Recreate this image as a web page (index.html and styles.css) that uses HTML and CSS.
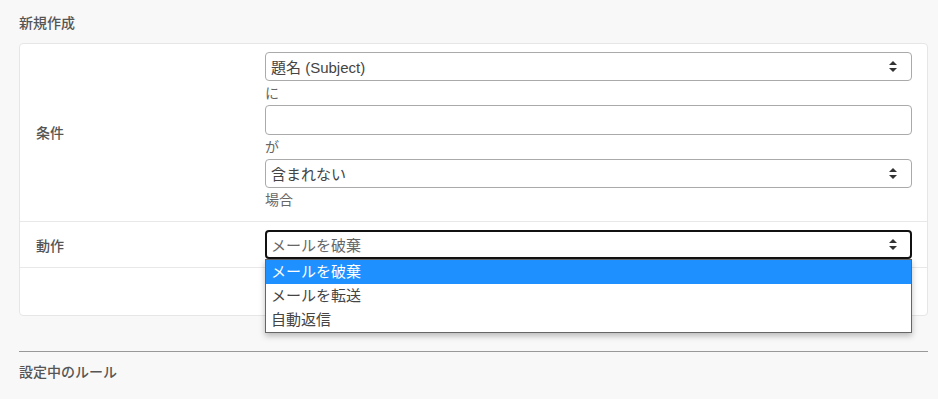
FILE: index.html
```html
<!DOCTYPE html>
<html lang="ja">
<head>
    <meta charset="UTF-8">
    <meta name="viewport" content="width=device-width, initial-scale=1.0">
    <title>メールフィルタ</title>
    <link rel="stylesheet" href="styles.css">
</head>
<body>
    <div class="page">
        <h2 class="section-title">新規作成</h2>

        <div class="rule-card">
            <!-- 条件 -->
            <div class="rule-row">
                <div class="rule-label">条件</div>
                <div class="rule-controls">
                    <div class="select-box">
                        <span>題名 (Subject)</span>
                        <svg class="select-arrow" width="8" height="11" viewBox="0 0 8 11"><path d="M4 0 L8 4 H0 Z M0 7 H8 L4 11 Z" fill="#333"/></svg>
                    </div>
                    <div class="hint">に</div>
                    <div class="text-box"></div>
                    <div class="hint">が</div>
                    <div class="select-box">
                        <span>含まれない</span>
                        <svg class="select-arrow" width="8" height="11" viewBox="0 0 8 11"><path d="M4 0 L8 4 H0 Z M0 7 H8 L4 11 Z" fill="#333"/></svg>
                    </div>
                    <div class="hint">場合</div>
                </div>
            </div>

            <!-- 動作 -->
            <div class="rule-row action-row">
                <div class="rule-label">動作</div>
                <div class="rule-controls">
                    <div class="dropdown">
                        <div class="select-box focused">
                            <span>メールを破棄</span>
                            <svg class="select-arrow" width="8" height="11" viewBox="0 0 8 11"><path d="M4 0 L8 4 H0 Z M0 7 H8 L4 11 Z" fill="#333"/></svg>
                        </div>
                        <ul class="dropdown-list">
                            <li class="selected">メールを破棄</li>
                            <li>メールを転送</li>
                            <li>自動返信</li>
                        </ul>
                    </div>
                </div>
            </div>

            <div class="rule-row empty-row"></div>
        </div>

        <hr class="divider">

        <h2 class="section-title">設定中のルール</h2>
    </div>
</body>
</html>
```

FILE: styles.css
```css
body {
    margin: 0;
    background-color: #f8f8f8;
    font-family: "Liberation Sans", "Noto Sans CJK JP", sans-serif;
    color: #444;
}

.page {
    padding: 12px 10px 0 19px;
}

.section-title {
    font-size: 14px;
    font-weight: 500;
    color: #555;
    margin: 0;
    height: 22px;
    line-height: 22px;
}

.rule-card {
    margin-top: 9px;
    background-color: #fff;
    border: 1px solid #e6e6e6;
    border-radius: 4px;
}

.rule-row {
    display: flex;
    align-items: center;
    border-bottom: 1px solid #e8e8e8;
    padding: 8px 15px 9px 0;
}

.rule-row:last-child {
    border-bottom: none;
}

.action-row {
    padding-bottom: 8px;
}

.empty-row {
    height: 47px;
    padding: 0;
}

.rule-label {
    width: 229px;
    padding-left: 16px;
    font-size: 14px;
    font-weight: 500;
    color: #555;
    flex-shrink: 0;
}

.rule-controls {
    flex: 1;
}

.select-box,
.text-box {
    box-sizing: border-box;
    height: 29px;
    border: 1px solid #aaa;
    border-radius: 4px;
    background-color: #fff;
    display: flex;
    align-items: center;
    justify-content: space-between;
    padding: 0 14px 0 5px;
    font-size: 15px;
    color: #444;
}

.text-box {
    height: 30px;
}

.select-box.focused {
    border: 2px solid #111;
    padding-left: 4px;
    padding-right: 13px;
    color: #666;
}

.select-arrow {
    flex-shrink: 0;
}

.hint {
    height: 24px;
    line-height: 24px;
    font-size: 14px;
    color: #666;
}

.dropdown {
    position: relative;
}

.dropdown-list {
    position: absolute;
    top: 29px;
    left: 0;
    right: 0;
    margin: 0;
    padding: 0;
    list-style: none;
    background-color: #fff;
    border: 1px solid #666;
    box-shadow: 0 3px 6px rgba(0, 0, 0, 0.25);
    z-index: 2;
}

.dropdown-list li {
    height: 24px;
    line-height: 24px;
    padding-left: 5px;
    font-size: 15px;
    color: #444;
}

.dropdown-list li.selected {
    background-color: #1e90ff;
    color: #fff;
}

.divider {
    border: none;
    border-top: 1px solid #999;
    margin: 35px 0 9px 0;
}
```
